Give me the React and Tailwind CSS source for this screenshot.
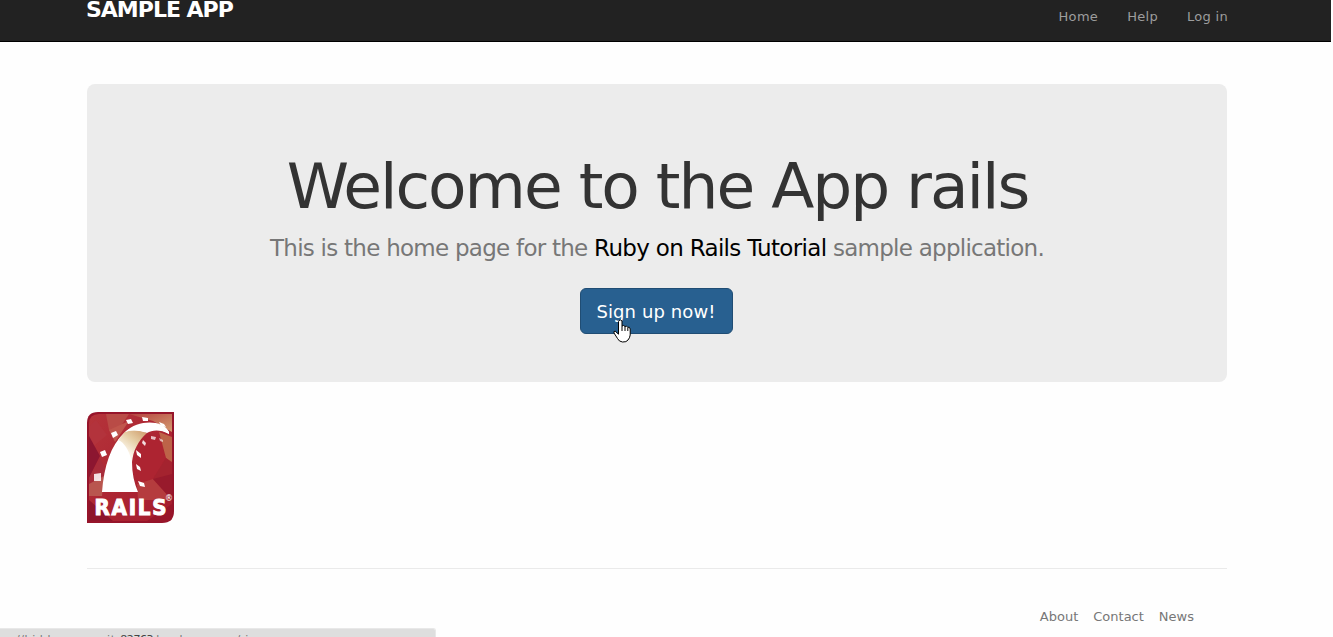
import React from "react";

const font = "font-['DejaVu_Sans',sans-serif]";

function RailsLogo() {
  return (
    <svg width="87" height="111" viewBox="0 0 87 111" className="block">
      <defs>
        <linearGradient id="bg" x1="0" y1="0" x2="1" y2="1">
          <stop offset="0" stopColor="#b5343a" />
          <stop offset="0.5" stopColor="#ad2633" />
          <stop offset="1" stopColor="#a41c2c" />
        </linearGradient>
        <linearGradient id="face" gradientUnits="userSpaceOnUse" x1="32" y1="52" x2="58" y2="18">
          <stop offset="0" stopColor="#fff" />
          <stop offset="0.35" stopColor="#faf3e6" />
          <stop offset="0.65" stopColor="#e6cfa6" />
          <stop offset="1" stopColor="#cf9c6c" />
        </linearGradient>
        <linearGradient id="corner" x1="0" y1="0" x2="1" y2="1">
          <stop offset="0" stopColor="#b5413f" />
          <stop offset="1" stopColor="#d49c70" />
        </linearGradient>
        <clipPath id="badge">
          <path d="M11 0H87V99Q87 111 75 111H0V11Q0 0 11 0Z" />
        </clipPath>
      </defs>
      <g clipPath="url(#badge)">
        <rect width="87" height="111" fill="#96142a" />
        <path d="M12 2H85V98Q85 109 74 109H2V12Q2 2 12 2Z" fill="url(#bg)" />
        <path d="M19 2H42L30 20L22 18Z" fill="#b94b46" />
        <path d="M22 18L42 9L28 30Z" fill="#c0564c" />
        <path d="M42 2H85V20L66 9Z" fill="url(#corner)" />
        <path d="M2 14L9 8L20 23L2 38Z" fill="#b3333c" />
        <path d="M2 24L13 44L2 66Z" fill="#8c1630" />
        <path d="M2 66L13 46L20 60L14 82H2Z" fill="#a82c3a" />
        <path d="M2 72L17 64L15 84H2Z" fill="#b9564f" />
        <path d="M58 20L74 27L79 46L66 67L51 72Q44 40 58 20Z" fill="#ad2431" />
        <path d="M72 20L85 25V50L79 46Z" fill="#bd6348" />
        <path d="M79 46L85 52V68L66 67Z" fill="#a4232f" />
        <path d="M50 72L66 67L85 88H51Z" fill="#b53c3e" />
        <path d="M66 67L85 62V88Z" fill="#981a2c" />
        <path d="M15 80C17 54 24 33 37 21C50 9 75 8 82 20V22C72 16 63 17 58 20C49 28 45 37 45 50Q45 66 51 80Z" fill="#fff" />
        <path d="M38 20C45 17 55 19 60 21C51 29 46 39 45 50C42 38 37 30 31 28Z" fill="url(#face)" />
        <path d="M38 20C52 7 76 8 82 20V22C73 17 65 18 60 21Q49 16 38 20Z" fill="#fff" />
        <g fill="#fff">
          <path d="M39 8L44 7L46 11L41 12Z" />
          <path d="M55 5L61 6L61 9L56 9Z" />
          <path d="M72 10L77 12L79 15L74 14Z" />
          <path d="M24 21L29 19L31 23L26 26Z" />
          <path d="M13 40L18 38L20 43L15 45Z" />
          <path d="M7 62L14 61L14 69L7 69Z" opacity="0.85" />
          <path d="M49 38L54 42L54 46L50 43Z" />
          <path d="M49 52L53 55L54 59L50 57Z" />
          <path d="M51 69L57 71L58 75L53 74Z" />
          <path d="M56 28L59 31L58 34L55 31Z" opacity="0.85" />
          <path d="M64 24L69 25L68 28L64 27Z" opacity="0.7" />
          <path d="M72 26L76 28L76 30L73 29Z" opacity="0.6" />
        </g>
        <path d="M2 88L26 109H2Z" fill="#8e142a" />
        <path d="M60 109L85 92V109Z" fill="#981629" />
      </g>
      <text x="7.5" y="103" textLength="72" lengthAdjust="spacing" fill="#fff" stroke="#fff" strokeWidth="1" fontFamily="DejaVu Sans Condensed, DejaVu Sans" fontStretch="condensed" fontWeight="700" fontSize="22">RAILS</text>
      <text x="78" y="89" fill="#fff" fontFamily="DejaVu Sans" fontSize="8">®</text>
    </svg>
  );
}

function Pointer() {
  return (
    <svg width="18" height="24" viewBox="0 0 18 24" className="absolute left-[32px] top-[30px]">
      <path d="M6 1.5Q7.8.2 9 2V7Q10.8 5.7 12 7.5Q13.8 6.4 14.7 8.3Q16.7 7.4 17.2 10V16Q16.8 19 15 21Q13.5 23.3 9.5 23Q6 22.7 4.5 19.5L1 14Q.3 12 2.2 12.2L5.5 15.2V2.5Z" fill="#fff" stroke="#000" />
      <path d="M9 7V12M12 7.5V12M14.8 8.5V12" stroke="#000" />
    </svg>
  );
}

export default function App() {
  return (
    <div className={`${font} relative flex h-[637px] w-[1333px] flex-col overflow-hidden bg-[#fefefe]`}>
      <header className="flex h-[42px] w-[1331px] shrink-0 justify-between border-b border-black bg-[#222] pr-[103px] pl-[86px]">
        <a className="-mt-1 h-7 text-[22px] leading-7 font-bold tracking-[-1px] whitespace-nowrap text-white">SAMPLE APP</a>
        <nav className="flex gap-[29px] pt-[7px] text-[13px] leading-5 tracking-[0.3px] text-[#9d9d9d]">
          <a>Home</a>
          <a>Help</a>
          <a>Log in</a>
        </nav>
      </header>
      <main className="mt-[42px] ml-[87px] w-[1140px] shrink-0">
        <section className="flex h-[298px] flex-col items-center rounded-lg bg-[#ececec] pt-[68px]">
          <h1 className="h-[69px] pl-px text-[63px] leading-[69px] tracking-[-2.03px] whitespace-nowrap text-[#333]">Welcome to the App rails</h1>
          <h2 className="mt-[11px] h-8 text-[23px] leading-8 tracking-[-0.74px] whitespace-nowrap text-[#777]">
            This is the home page for the <a className="tracking-[-0.68px] text-black">Ruby on Rails Tutorial</a> sample application.
          </h2>
          <a className="relative mt-6 mr-[2px] flex h-[46px] w-[153px] items-center justify-center rounded-md border border-[#204d74] bg-[#286090] text-[18px] tracking-[0.1px] whitespace-nowrap text-white">
            Sign up now!
            <Pointer />
          </a>
        </section>
        <div className="mt-[30px]"><RailsLogo /></div>
        <footer className="mt-[45px] flex justify-end border-t border-[#eaeaea] pt-[38px] pr-[33px]">
          <nav className="flex gap-[15px] text-[13px] leading-5 text-[#777]">
            <a>About</a>
            <a>Contact</a>
            <a>News</a>
          </nav>
        </footer>
      </main>
      <div className="absolute bottom-0 left-0 h-[9px] w-[436px] overflow-hidden rounded-tr-[3px] border-t border-r border-[#e8e8e8] bg-[#dedede] pl-[16px] text-[11px] leading-4 whitespace-nowrap text-[#777]">
        <div className="pt-[3px]"><span className="tracking-[0.6px]">//hidden-summit-</span><span className="tracking-[-0.4px]"><span className="text-[#444]">82763</span>.herokuapp.com/signup</span></div>
      </div>
    </div>
  );
}
